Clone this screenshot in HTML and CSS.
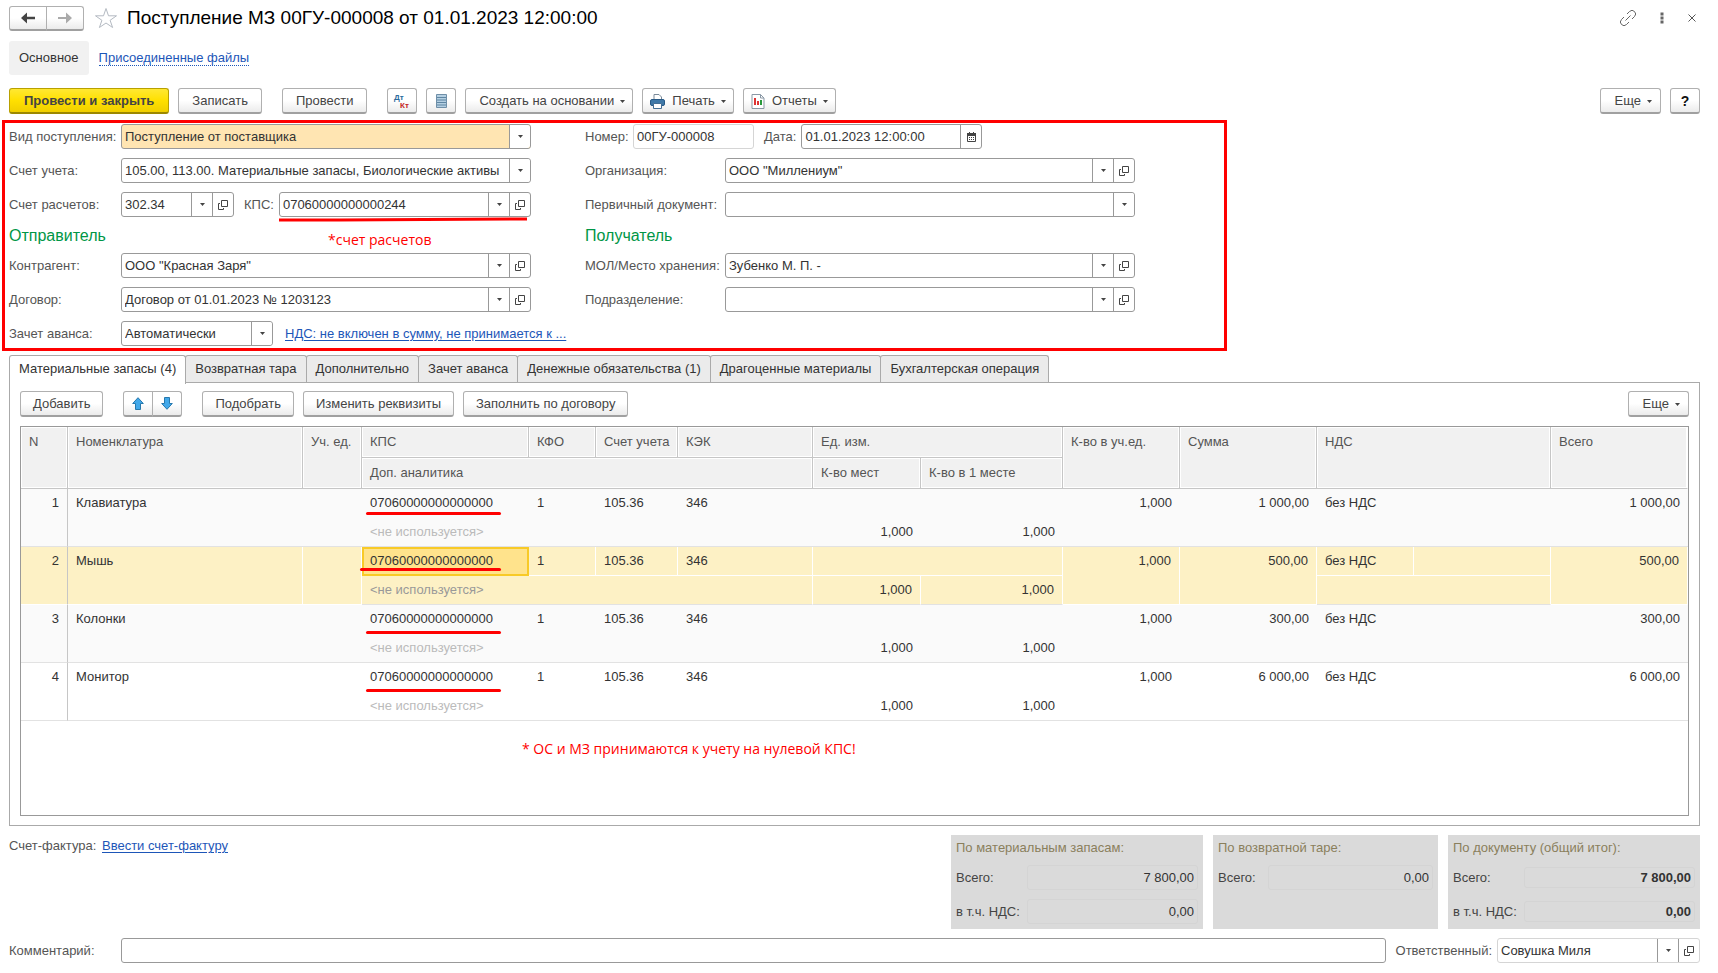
FILE: index.html
```
<!DOCTYPE html>
<html lang="ru">
<head>
<meta charset="utf-8">
<title>Поступление МЗ 00ГУ-000008</title>
<link rel="stylesheet" href="styles.css">
</head>
<body>
<svg class="defs" aria-hidden="true">
  <symbol id="i-open" viewBox="0 0 10 10"><path d="M3.5.5h6v6h-6zM2 3.5H.5v6h5V8" fill="none" stroke="#444"/></symbol>
  <symbol id="i-down" viewBox="0 0 5 3"><path d="M0 0h5L2.500 3z" fill="#444"/></symbol>
</svg>
<main class="page">
  <header class="title-bar">
    <div class="split">
      <button class="btn nav" aria-label="Назад"><svg width="14" height="12" viewBox="0 0 14 12"><path d="M0 6l6-5.500V4.800h8v2.400H6v4.300z" fill="#444"/></svg></button>
      <button class="btn nav" aria-label="Вперед"><svg width="14" height="12" viewBox="0 0 14 12"><path d="M14 6L8 .500V5H0v2h8v4.500z" fill="#aaa"/></svg></button>
    </div>
    <button class="plain" aria-label="В избранное"><svg width="24" height="22" viewBox="0 0 24 22"><path d="M12 1.500l2.500 7.300h8l-6.400 4.500 2.500 7.200L12 16l-6.600 4.500 2.500-7.200L1.500 8.800h8z" fill="#fff" stroke="#b4bac2"/></svg></button>
    <h1>Поступление МЗ 00ГУ-000008 от 01.01.2023 12:00:00</h1>
    <div class="window-tools">
      <button class="plain" aria-label="Ссылка"><svg width="16" height="16" viewBox="0 0 16 16"><path d="M7 4l2.500-2.500a3.200 3.200 0 0 1 5 5L12 9M9 12l-2.500 2.500a3.200 3.200 0 0 1-5-5L4 7M5.500 10.500l5-5" fill="none" stroke="#666"/></svg></button>
      <button class="plain" aria-label="Меню"><svg width="4" height="12" viewBox="0 0 4 12"><path d="M.5.5h3v3h-3zM.5 4.500h3v3h-3zM.5 8.500h3v3h-3z" fill="#666"/></svg></button>
      <button class="plain" aria-label="Закрыть"><svg width="8" height="8" viewBox="0 0 8 8"><path d="M.5.5l7 7M7.500.5l-7 7" stroke="#555"/></svg></button>
    </div>
  </header>

  <nav class="sections">
    <a class="current" href="#main">Основное</a>
    <a class="files" href="#files">Присоединенные файлы</a>
  </nav>

  <div class="commands">
    <button class="btn primary">Провести и закрыть</button>
    <button class="btn">Записать</button>
    <button class="btn gap-before">Провести</button>
    <button class="btn square gap-before" aria-label="Дт Кт"><svg width="18" height="18" viewBox="0 0 18 18" font-family="Liberation Sans" font-size="8" font-weight="bold"><text x="1" y="8" fill="#2a6a9c">Дт</text><text x="7" y="16" fill="#c4261d">Кт</text></svg></button>
    <button class="btn square" aria-label="Реестр"><svg width="11" height="14" viewBox="0 0 11 14"><path d="M.5.5h10v13H.5z" fill="#b4cfe2" stroke="#6f8fa8"/><path d="M1 3.500h9M1 6h9M1 8.500h9M1 11h9" stroke="#5f86a3"/></svg></button>
    <button class="btn">Создать на основании <svg class="caret"><use href="#i-down"/></svg></button>
    <button class="btn with-icon"><svg width="15" height="15" viewBox="0 0 15 15"><path d="M4 6V.5h5l2.500 2.500v3" fill="#fff" stroke="#7a8a99"/><rect x=".5" y="5.500" width="14" height="6" rx="1.500" fill="#3f78a8" stroke="#285a86"/><path d="M3.500 9.500h8v5h-8z" fill="#fff" stroke="#456f95"/></svg>Печать <svg class="caret"><use href="#i-down"/></svg></button>
    <button class="btn with-icon"><svg width="14" height="15" viewBox="0 0 14 15"><path d="M1 .5h8.500L13 4v10.500H1z" fill="#fff" stroke="#8a98a5"/><path d="M9.500.5V4H13" fill="none" stroke="#8a98a5"/><path d="M3 4h2v7H3z" fill="#d33"/><path d="M6 7h2v4H6z" fill="#d33"/><path d="M9 6h2v5H9z" fill="#2a9a3d"/></svg>Отчеты <svg class="caret"><use href="#i-down"/></svg></button>
    <button class="btn more push">Еще <svg class="caret"><use href="#i-down"/></svg></button>
    <button class="btn help">?</button>
  </div>

  <form class="details">
    <div class="column">
      <div class="row"><label for="kind">Вид поступления:</label>
        <div class="field pick marked"><select id="kind"><option>Поступление от поставщика</option></select><span class="arrow"><svg class="caret"><use href="#i-down"/></svg></span></div></div>
      <div class="row"><label for="acc">Счет учета:</label>
        <div class="field pick"><select id="acc"><option>105.00, 113.00. Материальные запасы, Биологические активы</option></select><span class="arrow"><svg class="caret"><use href="#i-down"/></svg></span></div></div>
      <div class="row"><label for="settle">Счет расчетов:</label>
        <div class="field short"><input id="settle" value="302.34"><button type="button" aria-label="Выбрать"><svg class="caret"><use href="#i-down"/></svg></button><button type="button" aria-label="Открыть"><svg class="open"><use href="#i-open"/></svg></button></div>
        <label class="inline" for="kps">КПС:</label>
        <div class="field"><input id="kps" value="07060000000000244"><button type="button" aria-label="Выбрать"><svg class="caret"><use href="#i-down"/></svg></button><button type="button" aria-label="Открыть"><svg class="open"><use href="#i-open"/></svg></button><svg class="stroke" viewBox="0 0 251 5" preserveAspectRatio="none"><path d="M1 3h60l188-1"/></svg></div></div>
      <h2>Отправитель<span class="note">*счет расчетов</span></h2>
      <div class="row"><label for="partner">Контрагент:</label>
        <div class="field"><input id="partner" value='ООО "Красная Заря"'><button type="button" aria-label="Выбрать"><svg class="caret"><use href="#i-down"/></svg></button><button type="button" aria-label="Открыть"><svg class="open"><use href="#i-open"/></svg></button></div></div>
      <div class="row"><label for="contract">Договор:</label>
        <div class="field"><input id="contract" value="Договор от 01.01.2023 № 1203123"><button type="button" aria-label="Выбрать"><svg class="caret"><use href="#i-down"/></svg></button><button type="button" aria-label="Открыть"><svg class="open"><use href="#i-open"/></svg></button></div></div>
      <div class="row"><label for="advance">Зачет аванса:</label>
        <div class="field pick medium"><select id="advance"><option>Автоматически</option></select><span class="arrow"><svg class="caret"><use href="#i-down"/></svg></span></div>
        <a class="vat" href="#vat">НДС: не включен в сумму, не принимается к ...</a></div>
    </div>
    <div class="column right">
      <div class="row"><label class="number" for="num">Номер:</label>
        <div class="field pale num"><input id="num" value="00ГУ-000008"></div>
        <label class="inline" for="date">Дата:</label>
        <div class="field datefield"><input id="date" value="01.01.2023 12:00:00"><button type="button" aria-label="Календарь"><svg width="9" height="10" viewBox="0 0 9 10"><path d="M.5 1.500h8v8h-8z" fill="#fff" stroke="#444"/><path d="M0 1h9v3H0zM2 0h1v1H2zM6 0h1v1H6zM2 5h1v1H2zM4 5h1v1H4zM6 5h1v1H6zM2 7h1v1H2zM4 7h1v1H4zM6 7h1v1H6z" fill="#444"/></svg></button></div></div>
      <div class="row"><label for="org">Организация:</label>
        <div class="field"><input id="org" value='ООО "Миллениум"'><button type="button" aria-label="Выбрать"><svg class="caret"><use href="#i-down"/></svg></button><button type="button" aria-label="Открыть"><svg class="open"><use href="#i-open"/></svg></button></div></div>
      <div class="row"><label for="src">Первичный документ:</label>
        <div class="field pick"><select id="src"><option></option></select><span class="arrow"><svg class="caret"><use href="#i-down"/></svg></span></div></div>
      <h2>Получатель</h2>
      <div class="row"><label for="keeper">МОЛ/Место хранения:</label>
        <div class="field"><input id="keeper" value="Зубенко М. П. -"><button type="button" aria-label="Выбрать"><svg class="caret"><use href="#i-down"/></svg></button><button type="button" aria-label="Открыть"><svg class="open"><use href="#i-open"/></svg></button></div></div>
      <div class="row"><label for="dept">Подразделение:</label>
        <div class="field"><input id="dept"><button type="button" aria-label="Выбрать"><svg class="caret"><use href="#i-down"/></svg></button><button type="button" aria-label="Открыть"><svg class="open"><use href="#i-open"/></svg></button></div></div>
    </div>
  </form>

  <div class="tabs" role="tablist">
    <button class="tab active" role="tab" aria-selected="true">Материальные запасы (4)</button>
    <button class="tab" role="tab">Возвратная тара</button>
    <button class="tab" role="tab">Дополнительно</button>
    <button class="tab" role="tab">Зачет аванса</button>
    <button class="tab" role="tab">Денежные обязательства (1)</button>
    <button class="tab" role="tab">Драгоценные материалы</button>
    <button class="tab" role="tab">Бухгалтерская операция</button>
  </div>
  <section class="panel">
    <div class="commands">
      <button class="btn">Добавить</button>
      <div class="split gap-before">
        <button class="btn square" aria-label="Вверх"><svg width="12" height="13" viewBox="0 0 12 13"><path d="M6 .700l5.300 5.800H8.500v6h-5v-6H.700z" fill="#41a8ea" stroke="#2678ad"/></svg></button>
        <button class="btn square" aria-label="Вниз"><svg width="12" height="13" viewBox="0 0 12 13"><path d="M6 12.300l5.300-5.800H8.500v-6h-5v6H.700z" fill="#41a8ea" stroke="#2678ad"/></svg></button>
      </div>
      <button class="btn gap-before">Подобрать</button>
      <button class="btn">Изменить реквизиты</button>
      <button class="btn">Заполнить по договору</button>
      <button class="btn more push">Еще <svg class="caret"><use href="#i-down"/></svg></button>
    </div>
    <div class="grid">
      <table>
        <colgroup><col class="c-n"><col><col class="c-unit"><col class="c-kps"><col class="c-kfo"><col class="c-acc"><col class="c-kek"><col class="c-places"><col class="c-per"><col class="c-qty"><col class="c-sum"><col class="c-vat"><col class="c-rate"><col class="c-total"></colgroup>
        <thead>
          <tr><th rowspan="2">N</th><th rowspan="2">Номенклатура</th><th rowspan="2">Уч. ед.</th><th>КПС</th><th>КФО</th><th>Счет учета</th><th>КЭК</th><th colspan="2">Ед. изм.</th><th rowspan="2">К-во в уч.ед.</th><th rowspan="2">Сумма</th><th rowspan="2" colspan="2">НДС</th><th rowspan="2">Всего</th></tr>
          <tr><th colspan="4">Доп. аналитика</th><th>К-во мест</th><th>К-во в 1 месте</th></tr>
        </thead>
        <tbody class="odd">
          <tr><td class="n" rowspan="2">1</td><td rowspan="2">Клавиатура</td><td rowspan="2"></td><td class="kps">07060000000000000<i class="mark"></i></td><td>1</td><td>105.36</td><td>346</td><td colspan="2"></td><td class="r" rowspan="2">1,000</td><td class="r" rowspan="2">1 000,00</td><td>без НДС</td><td></td><td class="r" rowspan="2">1 000,00</td></tr>
          <tr><td class="dim" colspan="4">&lt;не используется&gt;</td><td class="r">1,000</td><td class="r">1,000</td><td colspan="2"></td></tr>
        </tbody>
        <tbody class="selected">
          <tr><td class="n" rowspan="2">2</td><td rowspan="2">Мышь</td><td rowspan="2"></td><td class="kps cell">07060000000000000<i class="mark long"></i></td><td>1</td><td>105.36</td><td>346</td><td colspan="2"></td><td class="r" rowspan="2">1,000</td><td class="r" rowspan="2">500,00</td><td>без НДС</td><td></td><td class="r" rowspan="2">500,00</td></tr>
          <tr><td class="dim" colspan="4">&lt;не используется&gt;</td><td class="r">1,000</td><td class="r">1,000</td><td colspan="2"></td></tr>
        </tbody>
        <tbody class="odd">
          <tr><td class="n" rowspan="2">3</td><td rowspan="2">Колонки</td><td rowspan="2"></td><td class="kps">07060000000000000<i class="mark low"></i></td><td>1</td><td>105.36</td><td>346</td><td colspan="2"></td><td class="r" rowspan="2">1,000</td><td class="r" rowspan="2">300,00</td><td>без НДС</td><td></td><td class="r" rowspan="2">300,00</td></tr>
          <tr><td class="dim" colspan="4">&lt;не используется&gt;</td><td class="r">1,000</td><td class="r">1,000</td><td colspan="2"></td></tr>
        </tbody>
        <tbody>
          <tr><td class="n" rowspan="2">4</td><td rowspan="2">Монитор</td><td rowspan="2"></td><td class="kps">07060000000000000<i class="mark low"></i></td><td>1</td><td>105.36</td><td>346</td><td colspan="2"></td><td class="r" rowspan="2">1,000</td><td class="r" rowspan="2">6 000,00</td><td>без НДС</td><td></td><td class="r" rowspan="2">6 000,00</td></tr>
          <tr><td class="dim" colspan="4">&lt;не используется&gt;</td><td class="r">1,000</td><td class="r">1,000</td><td colspan="2"></td></tr>
        </tbody>
      </table>
      <p class="remark">* ОС и МЗ принимаются к учету на нулевой КПС!</p>
    </div>
  </section>

  <section class="summary">
    <p class="invoice">Счет-фактура: <a href="#invoice">Ввести счет-фактуру</a></p>
    <div class="total">
      <h3>По материальным запасам:</h3>
      <label for="m1">Всего:</label><input id="m1" readonly value="7 800,00">
      <label for="m2">в т.ч. НДС:</label><input id="m2" readonly value="0,00">
    </div>
    <div class="total narrow">
      <h3>По возвратной таре:</h3>
      <label for="t1">Всего:</label><input id="t1" readonly value="0,00">
    </div>
    <div class="total strong">
      <h3>По документу (общий итог):</h3>
      <label for="d1">Всего:</label><input id="d1" readonly value="7 800,00">
      <label for="d2">в т.ч. НДС:</label><input id="d2" readonly value="0,00">
    </div>
  </section>

  <footer class="row foot">
    <label for="comment">Комментарий:</label>
    <div class="field"><input id="comment"></div>
    <label class="inline" for="resp">Ответственный:</label>
    <div class="field resp pale"><input id="resp" value="Совушка Миля"><button type="button" aria-label="Выбрать"><svg class="caret"><use href="#i-down"/></svg></button><button type="button" aria-label="Открыть"><svg class="open"><use href="#i-open"/></svg></button></div>
  </footer>
</main>
</body>
</html>
```
FILE: styles.css
```
* { box-sizing: border-box; }
body {
  margin: 0;
  background: #fff;
  color: #333;
  font: 13px/16px "Liberation Sans", Arial, sans-serif;
}
button, input, select { font: inherit; color: inherit; }
h1, h2, h3, p { margin: 0; font-weight: normal; }
a { color: #1d56b8; text-underline-offset: 2px; }
.defs { position: absolute; width: 0; height: 0; }
.caret { width: 5px; height: 3px; flex: none; }
.open { width: 10px; height: 10px; }

.page {
  display: flex;
  flex-direction: column;
  min-height: 100vh;
  padding: 6px 18px 10px 9px;
}

/* Title */
.title-bar { display: flex; align-items: center; height: 24px; }
.title-bar h1 { margin-left: 9px; font-size: 19px; line-height: 24px; color: #000; white-space: nowrap; }
.plain { display: flex; padding: 0; border: 0; background: none; }
.split { display: flex; }
.split .btn:first-child { border-radius: 3px 0 0 3px; }
.split .btn:last-child { margin-left: -1px; border-radius: 0 3px 3px 0; }
.split + .plain { margin-left: 10px; }
.window-tools { display: flex; align-items: center; gap: 24px; margin-left: auto; padding-right: 4px; }

.sections { display: flex; align-items: center; gap: 10px; margin-top: 11px; }
.sections a { line-height: 34px; }
.sections .current { padding: 0 10px; border-radius: 3px; background: #f1f1f1; color: #333; text-decoration: none; }
.sections .files { line-height: 15px; text-decoration: none; border-bottom: 1px dotted #1d56b8; }

/* Buttons */
.commands { display: flex; gap: 9px; margin-top: 13px; }
.btn {
  display: flex;
  align-items: center;
  justify-content: center;
  height: 26px;
  padding: 1px 13px 0;
  border: 1px solid #b0b0b0;
  border-bottom: 2px solid #a0a0a0;
  border-radius: 3px;
  background: linear-gradient(#fff 50%, #ebebeb);
  color: #444;
  white-space: nowrap;
}
.btn .caret { margin-left: 6px; }
.btn:has(> .caret) { padding-right: 7px; }
.btn.nav { width: 38px; height: 25px; padding: 0; }
.btn.primary { padding: 1px 14px 0; border-color: #b8a000 #b8a000 #9c8800; background: linear-gradient(#ffe833, #ffe000 50%, #f0cf00); font-weight: bold; color: #444; }
.btn.square { width: 30px; padding: 0; }
.gap-before { margin-left: 11px; }
.btn.with-icon { padding-left: 7px; }
.with-icon svg:first-child { margin-right: 7px; }
.push { margin-left: auto; }
.btn.help { width: 30px; padding: 0; font-weight: bold; font-size: 14px; color: #111; }

/* Details form */
.details {
  display: grid;
  grid-template-columns: minmax(0, 522px) minmax(0, 550px);
  column-gap: 54px;
  max-width: 1225px;
  margin: 6px 0 0 -7px;
  padding: 1px 4px 2px;
  border: 3px solid #f00;
}
.column { display: flex; flex-direction: column; gap: 9px; }
.row { display: flex; align-items: center; height: 25px; color: #555; white-space: nowrap; }
.row > label { flex: none; width: 112px; }
.right .row > label { width: 140px; }
.row > label.inline, .right .row > label.inline { width: auto; padding: 0 5px 0 10px; }
.right .row > label.number { width: 48px; }
.column h2 { position: relative; height: 18px; font-size: 16px; line-height: 20px; color: #009646; }
.note { position: absolute; left: 319px; top: 5px; font: 14px/18px "Open Sans", sans-serif; color: #f00; }
.field {
  position: relative;
  display: flex;
  flex: 1;
  min-width: 0;
  height: 25px;
  border: 1px solid #999;
  border-radius: 3px;
  background: #fff;
  color: #333;
}
.field input, .field select {
  flex: 1;
  min-width: 0;
  width: 100%;
  padding: 0 3px;
  border: 0;
  background: none;
  appearance: none;
  outline: 0;
}
.field button, .arrow {
  display: flex;
  flex: none;
  align-items: center;
  justify-content: center;
  width: 21px;
  padding: 0;
  border: 0;
  border-left: 1px solid #999;
  background: none;
}
.pick { display: grid; }
.pick select, .arrow { grid-area: 1 / 1; }
.arrow { justify-self: end; background: #fff; border-radius: 0 3px 3px 0; pointer-events: none; }
.marked { background: #ffe5b2; }
.short { flex: none; width: 113px; }
.medium { flex: none; width: 152px; }
.pale { border-color: #d5d5d5; }
.num { flex: none; width: 121px; }
.datefield { flex: none; width: 181px; }
.vat { margin-left: 12px; }
.stroke { position: absolute; left: -2px; top: 24px; width: 251px; height: 5px; fill: none; stroke: #f00; stroke-width: 3px; }

/* Tabs */
.tabs { display: flex; margin-top: 4px; }
.tab {
  height: 28px;
  margin-right: -1px;
  padding: 0 9px 1px;
  border: 1px solid #aaa;
  border-bottom: 0;
  border-radius: 3px 3px 0 0;
  background: #ebebeb;
  white-space: nowrap;
}
.tab.active { position: relative; z-index: 1; height: 29px; margin-bottom: -1px; padding-bottom: 2px; background: #fff; }
.panel {
  display: flex;
  flex: 1;
  flex-direction: column;
  margin-top: -1px;
  padding: 8px 10px 9px;
  border: 1px solid #aaa;
}
.panel .commands { margin-top: 0; }
.panel .btn { padding-left: 12px; padding-right: 12px; }
.panel .btn.square { padding: 0; }
.btn.more, .panel .btn.more { padding-left: 14px; padding-right: 8px; }

/* Table */
.grid { flex: 1; margin-top: 9px; border: 1px solid #999; }
table { width: 100%; border-spacing: 0; table-layout: fixed; }
.c-n { width: 47px; }
.c-unit { width: 59px; }
.c-kps { width: 167px; }
.c-kfo { width: 67px; }
.c-acc { width: 82px; }
.c-kek { width: 135px; }
.c-places { width: 108px; }
.c-per { width: 142px; }
.c-qty { width: 117px; }
.c-sum { width: 137px; }
.c-vat { width: 97px; }
.c-rate { width: 137px; }
.c-total { width: 137px; }
th, td { padding: 0 8px; vertical-align: top; white-space: nowrap; text-align: left; font-weight: normal; }
th {
  height: 31px;
  line-height: 30px;
  border-right: 1px solid #c6c6c6;
  border-bottom: 1px solid #c6c6c6;
  background: #f1f1f1;
  box-shadow: inset 0 0 0 1px #fff;
  color: #555;
}
tr:first-child th:last-child { border-right-color: #fff; }
td { height: 29px; line-height: 28px; }
td.n { border-right: 1px solid #c6c6c6; text-align: right; }
td.r { text-align: right; }
.dim { color: #bbb; }
tr:last-child td, td[rowspan] { border-bottom: 1px solid #e2e2e2; }
.odd { background: #fafafa; }
.selected td { background: #fdf1c5; border-right: 1px solid #fff; border-bottom: 1px solid #fff; }
.selected td.n { border-right-color: #c6c6c6; }
.selected .dim { color: #999; }
.kps { position: relative; }
.selected td.cell { padding: 0 6px; border: 2px solid #f8ca27; background: #ffe38c; line-height: 24px; }
.mark { position: absolute; left: 4px; top: 23px; width: 135px; height: 3px; border-radius: 2px; background: #f00; }
.mark.long { left: -4px; top: 19px; width: 141px; }
.mark.low { top: 26px; }
.remark { padding: 19px 0 0 501px; font: 14px/18px "Open Sans", sans-serif; color: #f00; }

/* Totals */
.summary { display: flex; gap: 10px; margin-top: 9px; }
.invoice { flex: 1; padding-top: 3px; color: #555; }
.invoice a { margin-left: 2px; }
.total {
  display: grid;
  grid-template-columns: 71px 1fr;
  grid-template-rows: 16px;
  grid-auto-rows: 25px;
  align-items: center;
  align-content: start;
  row-gap: 9px;
  width: 252px;
  height: 94px;
  padding: 5px 5px 0;
  background: #dadada;
  color: #444;
}
.total h3 { grid-column: 1 / -1; font-size: 13px; color: #8a7f5c; }
.total input { width: 100%; min-width: 0; height: 25px; padding: 0 3px; border: 1px solid #d4d4d4; border-radius: 3px; background: none; text-align: right; color: #333; outline: 0; }
.total.narrow { width: 225px; grid-template-columns: 50px 1fr; }
.total.strong input { height: 21px; font-weight: bold; }
.foot { margin-top: 9px; }
.resp { flex: none; width: 203px; }
```
